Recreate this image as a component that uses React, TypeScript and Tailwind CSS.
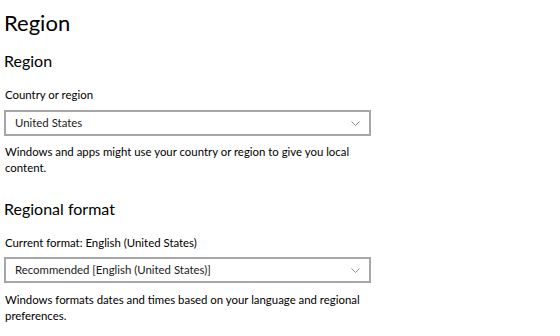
import React from 'react';

const ChevronDown = () => (
  <svg width="9" height="5" viewBox="0 0 9 5" fill="none" className="shrink-0">
    <path d="M0.5 0.5 L4.5 4.5 L8.5 0.5" stroke="#8c8c8c" strokeWidth="1" />
  </svg>
);

const Select = ({ value }: { value: string }) => (
  <div className="flex h-[26px] w-[367px] items-center justify-between border-2 border-[#a6a6a6] bg-white pl-[9px] pr-[9px]">
    <span className="text-[11.4px] leading-[16px] text-[#1a1a1a]">{value}</span>
    <ChevronDown />
  </div>
);

export default function App() {
  return (
    <div
      className="h-[336px] w-[560px] overflow-hidden bg-white pl-[4px] text-black"
      style={{ fontFamily: 'Lato, "Open Sans", sans-serif' }}
    >
      {/* Page title */}
      <h1 className="pt-[8px] text-[22px] leading-[30px] font-normal">Region</h1>

      {/* Country */}
      <section className="mt-[13px]">
        <h2 className="text-[16px] leading-[20px] font-normal">Region</h2>
        <div className="mt-[16px] pl-[1px] text-[11.4px] leading-[16px]">Country or region</div>
        <div className="mt-[7px]">
          <Select value="United States" />
        </div>
        <p className="mt-[8px] w-[380px] pl-[1px] text-[11.4px] leading-[16px]">
          Windows and apps might use your country or region to give you local content.
        </p>
      </section>

      {/* Regional format */}
      <section className="mt-[23px]">
        <h2 className="text-[16px] leading-[20px] font-normal">Regional format</h2>
        <div className="mt-[16px] pl-[1px] text-[11.4px] leading-[16px]">
          Current format: English (United States)
        </div>
        <div className="mt-[6px]">
          <Select value="Recommended [English (United States)]" />
        </div>
        <p className="mt-[9px] w-[380px] pl-[1px] text-[11.4px] leading-[16px]">
          Windows formats dates and times based on your language and regional preferences.
        </p>
      </section>
    </div>
  );
}
